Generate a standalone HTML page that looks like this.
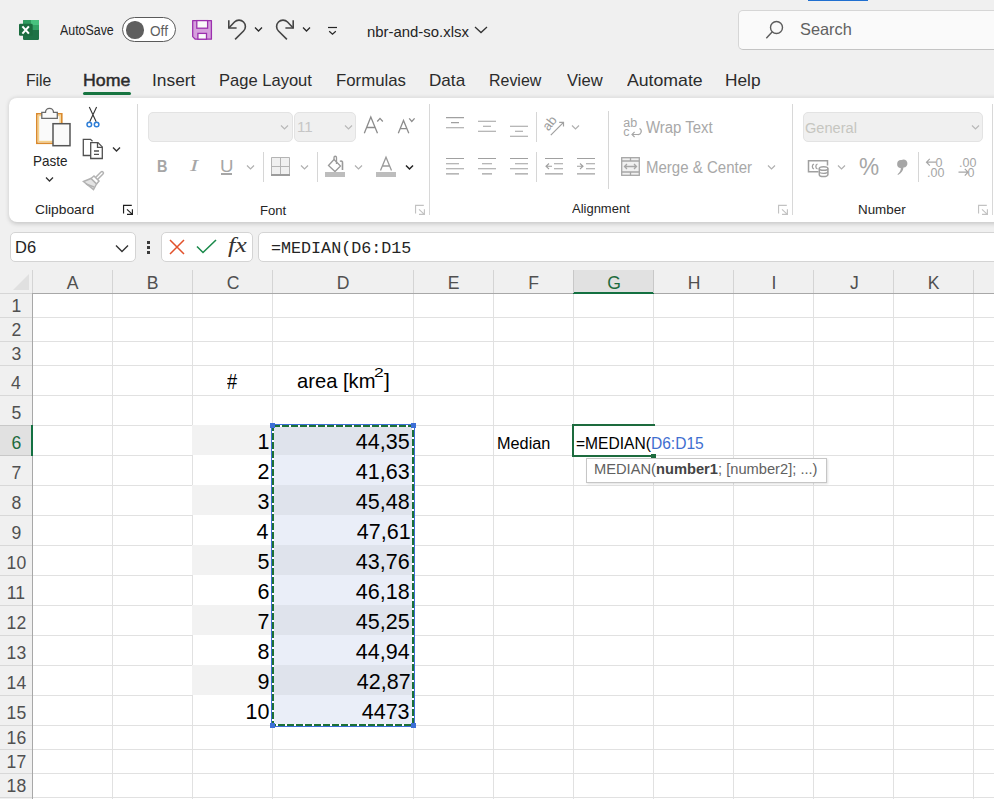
<!DOCTYPE html>
<html><head><meta charset="utf-8">
<style>
*{margin:0;padding:0;box-sizing:border-box}
html,body{width:994px;height:799px;overflow:hidden;background:#f0f0f0;font-family:"Liberation Sans",sans-serif;color:#242424}
.a{position:absolute}
.t{position:absolute;white-space:nowrap;line-height:1}
svg{position:absolute;overflow:visible}
</style></head><body>
<!-- top bar -->
<div class="a" style="left:808px;top:0;width:60px;height:1px;background:#1f6fd0"></div>

<!-- Excel icon -->
<svg style="left:19px;top:20px" width="20" height="20" viewBox="0 0 20 20">
  <rect x="4" y="0" width="16" height="20" rx="1.2" fill="#1e7145"/>
  <path d="M5 0 H12 V5 H4 V1 A1 1 0 0 1 5 0 Z" fill="#2f9c5f"/>
  <path d="M12 0 H19 A1 1 0 0 1 20 1 V5 H12 Z" fill="#48c27f"/>
  <rect x="12" y="5" width="8" height="5" fill="#33a366"/>
  <rect x="4" y="5" width="8" height="5" fill="#2a8a55"/>
  <rect x="0" y="3.8" width="13.7" height="12" rx="1.2" fill="#1b6c3f"/>
  <path d="M3.4 6.4 L9.9 13.6 M9.9 6.4 L3.4 13.6" stroke="#fff" stroke-width="2.1"/>
</svg>

<!-- toggle -->
<div class="a" style="left:122px;top:17px;width:54px;height:25px;border:1px solid #5a5a5a;border-radius:12.5px;background:#fff"></div>
<div class="a" style="left:126.2px;top:21.2px;width:17.4px;height:17.4px;border-radius:50%;background:#5f5f5f"></div>

<!-- save icon -->
<svg style="left:188px;top:16px" width="28" height="28" viewBox="0 0 28 28">
  <path d="M4.7 4.6 H23.4 V23.2 H7.3 L4.7 20.6 Z" fill="#d6a0dd" stroke="#9c30ae" stroke-width="1.3" stroke-linejoin="round"/>
  <rect x="8.8" y="4.6" width="10.8" height="7.6" fill="#fafafa" stroke="#9c30ae" stroke-width="1.3"/>
  <rect x="9.9" y="17.4" width="8.6" height="5.8" fill="#fafafa" stroke="#9c30ae" stroke-width="1.3"/>
</svg>
<!-- undo -->
<svg style="left:222px;top:15px" width="30" height="30" viewBox="0 0 30 30" fill="none" stroke="#454545" stroke-width="1.6">
  <path d="M6.8 5.3 V13 H14.6"/>
  <path d="M6.8 13 L12.47 6.97 A6.4 6.4 0 0 1 21.53 16.03 L13.1 24.4"/>
</svg>
<svg style="left:254px;top:26px" width="9" height="7" viewBox="0 0 9 7" fill="none" stroke="#2a2a2a" stroke-width="1.3"><path d="M1 1.5 L4.5 5 L8 1.5"/></svg>
<!-- redo -->
<svg style="left:270px;top:15px;transform:scaleX(-1)" width="30" height="30" viewBox="0 0 30 30" fill="none" stroke="#454545" stroke-width="1.6">
  <path d="M6.8 5.3 V13 H14.6"/>
  <path d="M6.8 13 L12.47 6.97 A6.4 6.4 0 0 1 21.53 16.03 L13.1 24.4"/>
</svg>
<svg style="left:302px;top:26px" width="9" height="7" viewBox="0 0 9 7" fill="none" stroke="#2a2a2a" stroke-width="1.3"><path d="M1 1.5 L4.5 5 L8 1.5"/></svg>
<!-- customize -->
<svg style="left:327px;top:26px" width="11" height="10" viewBox="0 0 11 10" fill="none" stroke="#262626" stroke-width="1.2"><path d="M1 1.5 H10"/><path d="M2.2 5.2 L5.5 8.3 L8.8 5.2"/></svg>

<svg style="left:474px;top:26px" width="14" height="8" viewBox="0 0 14 8" fill="none" stroke="#333" stroke-width="1.3"><path d="M1 1 L7 6.5 L13 1"/></svg>

<!-- search box -->
<div class="a" style="left:738px;top:10px;width:280px;height:40px;border:1px solid #d6d6d6;border-bottom-color:#c4c4c4;border-radius:5px;background:#fafafa"></div>
<svg style="left:765px;top:20px" width="20" height="20" viewBox="0 0 20 20" fill="none" stroke="#5c5c5c" stroke-width="1.4">
  <circle cx="11.5" cy="7.5" r="6"/><path d="M7.3 11.7 L1.3 18.2"/>
</svg>

<!-- tabs -->
<div class="a" style="left:83px;top:92px;width:48px;height:3px;border-radius:1.5px;background:#177541"></div>

<!-- ribbon panel -->
<div class="a" style="left:9px;top:97px;width:1000px;height:125px;background:#fff;border-radius:8px;border-top:1px solid #e3e3e3;box-shadow:0 1.5px 4px rgba(0,0,0,0.17)"></div>
<!-- Clipboard group -->
<svg style="left:35px;top:107px" width="37" height="40" viewBox="0 0 37 40">
  <rect x="1.8" y="6.8" width="25" height="29.5" fill="#fafafa" stroke="#da8a2e" stroke-width="1.6"/>
  <rect x="3.5" y="8.5" width="21.6" height="26" fill="none" stroke="#f6d189" stroke-width="1.4"/>
  <path d="M6.8 11.3 V5.3 H10.5 A4 4 0 0 1 18.5 5.3 H22.3 V11.3 Z" fill="#fafafa" stroke="#6a6a6a" stroke-width="1.3"/>
  <rect x="18" y="16.7" width="17" height="22" fill="#fafafa" stroke="#555" stroke-width="1.5"/>
</svg>
<svg style="left:45px;top:176px" width="9" height="7" viewBox="0 0 9 7" fill="none" stroke="#333" stroke-width="1.3"><path d="M1 1.5 L4.5 5 L8 1.5"/></svg>
<!-- scissors -->
<svg style="left:85px;top:106px" width="16" height="22" viewBox="0 0 16 22" fill="none">
  <path d="M4.3 1 L11.2 15.8 M11.6 1 L4.7 15.8" stroke="#333" stroke-width="1.1"/>
  <circle cx="4.3" cy="18.5" r="2.3" fill="#fff" stroke="#2f7fd8" stroke-width="1.5"/>
  <circle cx="11.6" cy="18.5" r="2.3" fill="#fff" stroke="#2f7fd8" stroke-width="1.5"/>
</svg>
<!-- copy -->
<svg style="left:82px;top:138px" width="23" height="22" viewBox="0 0 23 22" fill="none" stroke="#505050" stroke-width="1.3">
  <path d="M9 17.5 H1.3 V1.3 H8.5 L10.5 3.3"/>
  <path d="M8.7 4.6 H16 L20.3 8.9 V20.5 H8.7 Z" fill="#fff"/>
  <path d="M15.5 4.6 V9.4 H20.3"/>
  <path d="M12 13 H17 M12 16.3 H17"/>
</svg>
<svg style="left:112px;top:146px" width="9" height="7" viewBox="0 0 9 7" fill="none" stroke="#333" stroke-width="1.4"><path d="M1 1.5 L4.5 5 L8 1.5"/></svg>
<!-- brush -->
<svg style="left:82px;top:170px" width="23" height="21" viewBox="0 0 23 21" fill="none" stroke="#b2b2b2" stroke-width="1.5">
  <path d="M1.5 11.5 L9 8.5 L14.5 14 L11.5 19.5 Z" fill="#e4e4e4"/>
  <path d="M9 8.5 L12 6 L17 11 L14.5 14"/>
  <path d="M13.5 7.5 L19 2 A1.3 1.3 0 0 1 21 4 L15.5 9.5"/>
  <path d="M4 14 L12 17"/>
</svg>
<svg style="left:118.00px;top:200px" width="22" height="20" viewBox="0 0 22 20" fill="none" stroke="#1f1f1f" stroke-width="1.15"><path d="M5.55 13.6 V5.4 H13.8"/><path d="M9 9.3 L14.4 14.3 M14.4 9.3 V14.3 H9"/></svg>
<div class="a" style="left:137px;top:104px;width:1px;height:111px;background:#d8d8d8"></div>

<!-- Font group -->
<div class="a" style="left:148px;top:112px;width:145px;height:30px;background:#f0f0f0;border:1px solid #e3e3e3;border-radius:5px"></div>
<svg style="left:280px;top:124px" width="9" height="7" viewBox="0 0 9 7" fill="none" stroke="#b8b8b8" stroke-width="1.2"><path d="M1 1.5 L4.5 5 L8 1.5"/></svg>
<div class="a" style="left:294px;top:112px;width:62px;height:30px;background:#f0f0f0;border:1px solid #e3e3e3;border-radius:5px"></div>
<svg style="left:344px;top:124px" width="9" height="7" viewBox="0 0 9 7" fill="none" stroke="#b8b8b8" stroke-width="1.2"><path d="M1 1.5 L4.5 5 L8 1.5"/></svg>
<svg style="left:362px;top:115px" width="24" height="20" viewBox="0 0 24 20" fill="none" stroke="#8c8c8c" stroke-width="1.3">
  <path d="M2.3 18.2 L8.8 2 L15.5 18.2 M4.5 12.5 H13.2"/><path d="M15.3 6.5 L18 3.4 L20.8 6.5"/>
</svg>
<svg style="left:396px;top:115px" width="22" height="20" viewBox="0 0 22 20" fill="none" stroke="#8c8c8c" stroke-width="1.3">
  <path d="M2.3 18.2 L7.5 5.5 L12.8 18.2 M4.3 13.7 H10.8"/><path d="M13.2 3.4 L15.8 6.5 L18.6 3.4"/>
</svg>
<div class="a" style="left:221px;top:173px;width:11px;height:1.5px;background:#a6a6a6"></div>
<svg style="left:246px;top:164px" width="9" height="7" viewBox="0 0 9 7" fill="none" stroke="#b0b0b0" stroke-width="1.2"><path d="M1 1.5 L4.5 5 L8 1.5"/></svg>
<div class="a" style="left:263px;top:152px;width:1px;height:30px;background:#d6d6d6"></div>
<svg style="left:271px;top:157px" width="19" height="19" viewBox="0 0 19 19">
  <rect x="0" y="0" width="19" height="19" fill="#f0f0f0"/>
  <path d="M0.5 0.5 H18.5 V18 M0.5 0.5 V18 M0.5 9.5 H18.5 M9.5 0.5 V18" fill="none" stroke="#b4b4b4" stroke-width="1"/>
  <rect x="0" y="17" width="19" height="2" fill="#9c9c9c"/>
</svg>
<svg style="left:300px;top:164px" width="9" height="7" viewBox="0 0 9 7" fill="none" stroke="#b0b0b0" stroke-width="1.2"><path d="M1 1.5 L4.5 5 L8 1.5"/></svg>
<div class="a" style="left:317px;top:152px;width:1px;height:30px;background:#d6d6d6"></div>
<svg style="left:325px;top:156px" width="21" height="22" viewBox="0 0 21 22" fill="none" stroke="#9a9a9a" stroke-width="1.3">
  <path d="M3.5 9.5 L9 3.5 L15.5 10 L10 15.5 Z" fill="#fff"/>
  <path d="M9 3.5 V1.5 A1.2 1.2 0 0 1 11.5 1.5 V8"/>
  <path d="M15 5.5 A1.5 1.5 0 0 1 17.5 7 V14" stroke-width="1.6"/>
  <rect x="0" y="16" width="20" height="5" fill="#bdbdbd" stroke="none"/>
</svg>
<svg style="left:354px;top:164px" width="9" height="7" viewBox="0 0 9 7" fill="none" stroke="#b0b0b0" stroke-width="1.2"><path d="M1 1.5 L4.5 5 L8 1.5"/></svg>
<svg style="left:376px;top:156px" width="21" height="22" viewBox="0 0 21 22" fill="none" stroke="#9a9a9a" stroke-width="1.3">
  <path d="M4.5 14.5 L10 1.2 L15.5 14.5 M6.5 10 H13.5"/>
  <rect x="0" y="16" width="20" height="5" fill="#bdbdbd" stroke="none"/>
</svg>
<svg style="left:405px;top:164px" width="9" height="7" viewBox="0 0 9 7" fill="none" stroke="#222" stroke-width="1.5"><path d="M1 1.5 L4.5 5 L8 1.5"/></svg>
<svg style="left:410.05px;top:200px" width="22" height="20" viewBox="0 0 22 20" fill="none" stroke="#c2c2c2" stroke-width="1.15"><path d="M5.55 13.6 V5.4 H13.8"/><path d="M9 9.3 L14.4 14.3 M14.4 9.3 V14.3 H9"/></svg>
<div class="a" style="left:429px;top:104px;width:1px;height:111px;background:#d8d8d8"></div>

<!-- Alignment group -->
<svg style="left:445px;top:116px" width="84" height="22" viewBox="0 0 84 22" fill="none" stroke="#a0a0a0" stroke-width="1.1">
  <path d="M1 1.6 H19 M6 6.6 H14 M1 11.7 H19"/>
  <path d="M33 5.2 H51 M38 10.3 H46 M33 15.3 H51"/>
  <path d="M65 10.3 H83 M70 15.2 H78 M65 20.2 H83"/>
</svg>
<div class="a" style="left:536px;top:112px;width:1px;height:30px;background:#d6d6d6"></div>
<svg style="left:541px;top:113px" width="26" height="26" viewBox="0 0 26 26" fill="none" stroke="#a0a0a0" stroke-width="1.2">
  <path d="M9.8 22.1 L22.5 9.3 M18.2 9.3 H22.5 V13.5"/>
  <text x="0" y="0" transform="translate(7.6 18.6) rotate(-52)" font-family="Liberation Sans" font-size="13" fill="#9c9c9c" stroke="none">ab</text>
</svg>
<svg style="left:571px;top:124px" width="9" height="7" viewBox="0 0 9 7" fill="none" stroke="#b0b0b0" stroke-width="1.2"><path d="M1 1.5 L4.5 5 L8 1.5"/></svg>
<svg style="left:445px;top:157px" width="150" height="19" viewBox="0 0 150 19" fill="none" stroke="#a0a0a0" stroke-width="1.1">
  <path d="M1 1.5 H19 M1 6.8 H14 M1 11.8 H19 M1 16.9 H14"/>
  <path d="M33 1.5 H51 M37 6.8 H47 M33 11.8 H51 M37 16.9 H47"/>
  <path d="M65 1.5 H83 M70 6.8 H83 M65 11.8 H83 M70 16.9 H83"/>
  <path d="M100 1.5 H118 M109 6.8 H118 M109 11.8 H118 M100 16.9 H118 M101 9.3 H107 M104 6.5 L101 9.3 L104 12"/>
  <path d="M132 1.5 H150 M141 6.8 H150 M141 11.8 H150 M132 16.9 H150 M132 9.3 H138 M135 6.5 L138 9.3 L135 12"/>
</svg>
<div class="a" style="left:536px;top:152px;width:1px;height:30px;background:#d6d6d6"></div>
<div class="a" style="left:608px;top:111px;width:1px;height:78px;background:#d6d6d6"></div>
<svg style="left:622px;top:117px" width="21" height="22" viewBox="0 0 21 22" fill="none" stroke="#a6a6a6" stroke-width="1.2">
  <text x="1.2" y="10" font-family="Liberation Sans" font-size="12.5" fill="#a6a6a6" stroke="none">ab</text>
  <text x="1.2" y="19.2" font-family="Liberation Sans" font-size="12.5" fill="#a6a6a6" stroke="none">c</text>
  <path d="M17.5 11.5 A3.2 3.2 0 0 1 15.5 17.5 H10 M12.6 14.8 L10 17.5 L12.6 20.2"/>
</svg>
<svg style="left:621px;top:157px" width="19" height="19" viewBox="0 0 19 19" fill="none" stroke="#a6a6a6" stroke-width="1.3">
  <rect x="0.7" y="0.7" width="17.6" height="17.6" fill="#f0f0f0"/>
  <path d="M0.7 4 H18.3 M0.7 15 H18.3 M9.5 0.7 V4 M9.5 15 V18.3"/>
  <path d="M3.5 9.5 H15.5 M6 7 L3.5 9.5 L6 12 M13 7 L15.5 9.5 L13 12"/>
</svg>
<svg style="left:767px;top:164px" width="9" height="7" viewBox="0 0 9 7" fill="none" stroke="#b0b0b0" stroke-width="1.2"><path d="M1 1.5 L4.5 5 L8 1.5"/></svg>
<svg style="left:773.05px;top:200px" width="22" height="20" viewBox="0 0 22 20" fill="none" stroke="#c2c2c2" stroke-width="1.15"><path d="M5.55 13.6 V5.4 H13.8"/><path d="M9 9.3 L14.4 14.3 M14.4 9.3 V14.3 H9"/></svg>
<div class="a" style="left:792px;top:104px;width:1px;height:111px;background:#d8d8d8"></div>

<!-- Number group -->
<div class="a" style="left:803px;top:112px;width:180px;height:30px;background:#f0f0f0;border:1px solid #e3e3e3;border-radius:5px"></div>
<svg style="left:971px;top:124px" width="9" height="7" viewBox="0 0 9 7" fill="none" stroke="#b8b8b8" stroke-width="1.2"><path d="M1 1.5 L4.5 5 L8 1.5"/></svg>
<svg style="left:807px;top:159px" width="23" height="19" viewBox="0 0 23 19" fill="none" stroke="#a0a0a0" stroke-width="1.5">
  <path d="M11.5 12.8 H1.5 V1.8 H20.5 V6.5"/>
  <path d="M7 5 A2.3 2.6 0 0 0 7 10 M10.5 5 A2.3 2.6 0 0 0 10.5 10" stroke-width="1.3"/>
  <path d="M12.3 9.5 V15.8 A4.3 1.8 0 0 0 20.9 15.8 V9.5" fill="#fff"/>
  <ellipse cx="16.6" cy="9.5" rx="4.3" ry="1.8" fill="#fff"/>
  <path d="M12.3 12.6 A4.3 1.8 0 0 0 20.9 12.6" stroke-width="1.2"/>
</svg>
<svg style="left:837px;top:164px" width="9" height="7" viewBox="0 0 9 7" fill="none" stroke="#b0b0b0" stroke-width="1.2"><path d="M1 1.5 L4.5 5 L8 1.5"/></svg>
<svg style="left:895px;top:159px" width="13" height="17" viewBox="0 0 13 17"><path d="M6.5 1 A4 4 0 1 1 8.5 8.5 Q8 13 3 16 L2.5 15.2 Q6 12.5 5.8 9 A4 4 0 0 1 6.5 1 Z" fill="#a6a6a6"/></svg>
<div class="a" style="left:918px;top:152px;width:1px;height:30px;background:#d6d6d6"></div>
<svg style="left:925px;top:156px" width="22" height="22" viewBox="0 0 22 22" fill="none" stroke="#a6a6a6" stroke-width="1.2">
  <path d="M1.5 6.2 H11 M4.8 2.8 L1.5 6.2 L4.8 9.6"/>
  <text x="10.5" y="10.6" font-family="Liberation Sans" font-size="12.5" fill="#a6a6a6" stroke="none">0</text>
  <text x="2" y="20.6" font-family="Liberation Sans" font-size="12.5" fill="#a6a6a6" stroke="none">.00</text>
</svg>
<svg style="left:957px;top:156px" width="22" height="22" viewBox="0 0 22 22" fill="none" stroke="#a6a6a6" stroke-width="1.2">
  <text x="2" y="10.6" font-family="Liberation Sans" font-size="12.5" fill="#a6a6a6" stroke="none">.00</text>
  <path d="M1.5 16.2 H11 M7.8 12.8 L11 16.2 L7.8 19.6"/>
  <text x="10.5" y="20.6" font-family="Liberation Sans" font-size="12.5" fill="#a6a6a6" stroke="none">0</text>
</svg>
<svg style="left:972.65px;top:200px" width="22" height="20" viewBox="0 0 22 20" fill="none" stroke="#c2c2c2" stroke-width="1.15"><path d="M5.55 13.6 V5.4 H13.8"/><path d="M9 9.3 L14.4 14.3 M14.4 9.3 V14.3 H9"/></svg>
<div class="a" style="left:992px;top:104px;width:1px;height:111px;background:#d8d8d8"></div>


<!-- formula bar -->
<div class="a" style="left:10px;top:232px;width:126px;height:30px;background:#fff;border:1px solid #d4d4d4;border-radius:5px"></div>
<svg style="left:115px;top:244px" width="14" height="9" viewBox="0 0 14 9" fill="none" stroke="#333" stroke-width="1.4"><path d="M1 1.5 L7 7.5 L13 1.5"/></svg>
<div class="a" style="left:147px;top:241px;width:3px;height:3px;background:#3a3a3a"></div>
<div class="a" style="left:147px;top:246px;width:3px;height:3px;background:#3a3a3a"></div>
<div class="a" style="left:147px;top:251px;width:3px;height:3px;background:#3a3a3a"></div>
<div class="a" style="left:161px;top:232px;width:92px;height:30px;background:#fff;border:1px solid #d4d4d4;border-radius:5px"></div>
<svg style="left:169px;top:239px" width="16" height="16" viewBox="0 0 16 16" fill="none" stroke="#e2512b" stroke-width="1.5"><path d="M1 1 L15 15 M15 1 L1 15"/></svg>
<svg style="left:196px;top:239px" width="21" height="15" viewBox="0 0 21 15" fill="none" stroke="#1b8a4b" stroke-width="1.6"><path d="M1 7.5 L7 13.5 L20 1"/></svg>
<div class="a" style="left:258px;top:232px;width:800px;height:30px;background:#fff;border:1px solid #d4d4d4;border-radius:5px"></div>

<div class="a" style="left:33px;top:294px;width:961px;height:505px;background:#fff"></div>
<div class="a" style="left:33px;top:317px;width:961px;height:1px;background:#e1e1e1"></div>
<div class="a" style="left:33px;top:341px;width:961px;height:1px;background:#e1e1e1"></div>
<div class="a" style="left:33px;top:365px;width:961px;height:1px;background:#e1e1e1"></div>
<div class="a" style="left:33px;top:395px;width:961px;height:1px;background:#e1e1e1"></div>
<div class="a" style="left:33px;top:425px;width:961px;height:1px;background:#e1e1e1"></div>
<div class="a" style="left:33px;top:455px;width:961px;height:1px;background:#e1e1e1"></div>
<div class="a" style="left:33px;top:485px;width:961px;height:1px;background:#e1e1e1"></div>
<div class="a" style="left:33px;top:515px;width:961px;height:1px;background:#e1e1e1"></div>
<div class="a" style="left:33px;top:545px;width:961px;height:1px;background:#e1e1e1"></div>
<div class="a" style="left:33px;top:575px;width:961px;height:1px;background:#e1e1e1"></div>
<div class="a" style="left:33px;top:605px;width:961px;height:1px;background:#e1e1e1"></div>
<div class="a" style="left:33px;top:635px;width:961px;height:1px;background:#e1e1e1"></div>
<div class="a" style="left:33px;top:665px;width:961px;height:1px;background:#e1e1e1"></div>
<div class="a" style="left:33px;top:695px;width:961px;height:1px;background:#e1e1e1"></div>
<div class="a" style="left:33px;top:725px;width:961px;height:1px;background:#e1e1e1"></div>
<div class="a" style="left:33px;top:749px;width:961px;height:1px;background:#e1e1e1"></div>
<div class="a" style="left:33px;top:773px;width:961px;height:1px;background:#e1e1e1"></div>
<div class="a" style="left:33px;top:797px;width:961px;height:1px;background:#e1e1e1"></div>
<div class="a" style="left:33px;top:821px;width:961px;height:1px;background:#e1e1e1"></div>
<div class="a" style="left:112px;top:294px;width:1px;height:505px;background:#e1e1e1"></div>
<div class="a" style="left:192px;top:294px;width:1px;height:505px;background:#e1e1e1"></div>
<div class="a" style="left:272px;top:294px;width:1px;height:505px;background:#e1e1e1"></div>
<div class="a" style="left:413px;top:294px;width:1px;height:505px;background:#e1e1e1"></div>
<div class="a" style="left:493px;top:294px;width:1px;height:505px;background:#e1e1e1"></div>
<div class="a" style="left:573px;top:294px;width:1px;height:505px;background:#e1e1e1"></div>
<div class="a" style="left:653px;top:294px;width:1px;height:505px;background:#e1e1e1"></div>
<div class="a" style="left:733px;top:294px;width:1px;height:505px;background:#e1e1e1"></div>
<div class="a" style="left:813px;top:294px;width:1px;height:505px;background:#e1e1e1"></div>
<div class="a" style="left:893px;top:294px;width:1px;height:505px;background:#e1e1e1"></div>
<div class="a" style="left:973px;top:294px;width:1px;height:505px;background:#e1e1e1"></div>
<div class="a" style="left:1053px;top:294px;width:1px;height:505px;background:#e1e1e1"></div>
<div class="a" style="left:0;top:269px;width:994px;height:24px;background:#f0f0f0"></div>
<div class="a" style="left:32px;top:270px;width:1px;height:23px;background:#d4d4d4"></div>
<div class="a" style="left:112px;top:270px;width:1px;height:23px;background:#d4d4d4"></div>
<div class="a" style="left:192px;top:270px;width:1px;height:23px;background:#d4d4d4"></div>
<div class="a" style="left:272px;top:270px;width:1px;height:23px;background:#d4d4d4"></div>
<div class="a" style="left:413px;top:270px;width:1px;height:23px;background:#d4d4d4"></div>
<div class="a" style="left:493px;top:270px;width:1px;height:23px;background:#d4d4d4"></div>
<div class="a" style="left:573px;top:270px;width:80px;height:23px;background:#e1e1e1"></div>
<div class="a" style="left:573px;top:270px;width:1px;height:23px;background:#d4d4d4"></div>
<div class="a" style="left:653px;top:270px;width:1px;height:23px;background:#d4d4d4"></div>
<div class="a" style="left:733px;top:270px;width:1px;height:23px;background:#d4d4d4"></div>
<div class="a" style="left:813px;top:270px;width:1px;height:23px;background:#d4d4d4"></div>
<div class="a" style="left:893px;top:270px;width:1px;height:23px;background:#d4d4d4"></div>
<div class="a" style="left:973px;top:270px;width:1px;height:23px;background:#d4d4d4"></div>
<div class="a" style="left:0;top:293px;width:32px;height:1px;background:#d6d6d6"></div>
<div class="a" style="left:32px;top:293px;width:962px;height:1px;background:#a8a8a8"></div>
<div class="a" style="left:573px;top:292px;width:81px;height:2px;background:#137041"></div>
<svg style="left:13px;top:274px" width="17" height="17" viewBox="0 0 17 17"><path d="M16 0 V16 H0 Z" fill="#e0e0e0"/></svg>
<div class="a" style="left:0;top:294px;width:32px;height:505px;background:#f0f0f0"></div>
<div class="a" style="left:0;top:317px;width:32px;height:1px;background:#d8d8d8"></div>
<div class="a" style="left:0;top:341px;width:32px;height:1px;background:#d8d8d8"></div>
<div class="a" style="left:0;top:365px;width:32px;height:1px;background:#d8d8d8"></div>
<div class="a" style="left:0;top:395px;width:32px;height:1px;background:#d8d8d8"></div>
<div class="a" style="left:0;top:425px;width:32px;height:1px;background:#d8d8d8"></div>
<div class="a" style="left:0;top:425px;width:32px;height:30px;background:#e1e1e1"></div>
<div class="a" style="left:0;top:455px;width:32px;height:1px;background:#d8d8d8"></div>
<div class="a" style="left:0;top:485px;width:32px;height:1px;background:#d8d8d8"></div>
<div class="a" style="left:0;top:515px;width:32px;height:1px;background:#d8d8d8"></div>
<div class="a" style="left:0;top:545px;width:32px;height:1px;background:#d8d8d8"></div>
<div class="a" style="left:0;top:575px;width:32px;height:1px;background:#d8d8d8"></div>
<div class="a" style="left:0;top:605px;width:32px;height:1px;background:#d8d8d8"></div>
<div class="a" style="left:0;top:635px;width:32px;height:1px;background:#d8d8d8"></div>
<div class="a" style="left:0;top:665px;width:32px;height:1px;background:#d8d8d8"></div>
<div class="a" style="left:0;top:695px;width:32px;height:1px;background:#d8d8d8"></div>
<div class="a" style="left:0;top:725px;width:32px;height:1px;background:#d8d8d8"></div>
<div class="a" style="left:0;top:749px;width:32px;height:1px;background:#d8d8d8"></div>
<div class="a" style="left:0;top:773px;width:32px;height:1px;background:#d8d8d8"></div>
<div class="a" style="left:0;top:797px;width:32px;height:1px;background:#d8d8d8"></div>
<div class="a" style="left:32px;top:293px;width:1px;height:506px;background:#a8a8a8"></div>
<div class="a" style="left:0;top:425px;width:31px;height:1px;background:#c8c8c8"></div>
<div class="a" style="left:0;top:455px;width:31px;height:1px;background:#c8c8c8"></div>
<div class="a" style="left:573px;top:270px;width:1px;height:23px;background:#c8c8c8"></div>
<div class="a" style="left:653px;top:270px;width:1px;height:23px;background:#c8c8c8"></div>
<div class="a" style="left:31px;top:425px;width:2px;height:31px;background:#137041"></div>
<div class="a" style="left:192px;top:425px;width:80px;height:30px;background:#f2f2f2"></div>
<div class="a" style="left:272px;top:425px;width:141px;height:30px;background:#dfe3ec"></div>
<div class="a" style="left:192px;top:455px;width:80px;height:30px;background:#ffffff"></div>
<div class="a" style="left:272px;top:455px;width:141px;height:30px;background:#eaeef8"></div>
<div class="a" style="left:192px;top:455px;width:1px;height:30px;background:#e1e1e1"></div>
<div class="a" style="left:192px;top:485px;width:80px;height:30px;background:#f2f2f2"></div>
<div class="a" style="left:272px;top:485px;width:141px;height:30px;background:#dfe3ec"></div>
<div class="a" style="left:192px;top:515px;width:80px;height:30px;background:#ffffff"></div>
<div class="a" style="left:272px;top:515px;width:141px;height:30px;background:#eaeef8"></div>
<div class="a" style="left:192px;top:515px;width:1px;height:30px;background:#e1e1e1"></div>
<div class="a" style="left:192px;top:545px;width:80px;height:30px;background:#f2f2f2"></div>
<div class="a" style="left:272px;top:545px;width:141px;height:30px;background:#dfe3ec"></div>
<div class="a" style="left:192px;top:575px;width:80px;height:30px;background:#ffffff"></div>
<div class="a" style="left:272px;top:575px;width:141px;height:30px;background:#eaeef8"></div>
<div class="a" style="left:192px;top:575px;width:1px;height:30px;background:#e1e1e1"></div>
<div class="a" style="left:192px;top:605px;width:80px;height:30px;background:#f2f2f2"></div>
<div class="a" style="left:272px;top:605px;width:141px;height:30px;background:#dfe3ec"></div>
<div class="a" style="left:192px;top:635px;width:80px;height:30px;background:#ffffff"></div>
<div class="a" style="left:272px;top:635px;width:141px;height:30px;background:#eaeef8"></div>
<div class="a" style="left:192px;top:635px;width:1px;height:30px;background:#e1e1e1"></div>
<div class="a" style="left:192px;top:665px;width:80px;height:30px;background:#f2f2f2"></div>
<div class="a" style="left:272px;top:665px;width:141px;height:30px;background:#dfe3ec"></div>
<div class="a" style="left:192px;top:695px;width:80px;height:30px;background:#ffffff"></div>
<div class="a" style="left:272px;top:695px;width:141px;height:30px;background:#eaeef8"></div>
<div class="a" style="left:192px;top:695px;width:1px;height:30px;background:#e1e1e1"></div>
<svg style="left:270px;top:423px" width="147" height="306" viewBox="0 0 147 306">
<rect x="1.5" y="1.5" width="143" height="302" fill="none" stroke="#3d6fd6" stroke-width="1"/>
<rect x="3" y="3" width="140" height="299" fill="none" stroke="#ffffff" stroke-width="2"/>
<rect x="3" y="3" width="140" height="299" fill="none" stroke="#1c7036" stroke-width="2" stroke-dasharray="7 2"/>
<rect x="0" y="0" width="5" height="5" fill="#3d6fd6"/>
<rect x="141" y="0" width="5" height="5" fill="#3d6fd6"/>
<rect x="0" y="300" width="5" height="5" fill="#3d6fd6"/>
<rect x="141" y="300" width="5" height="5" fill="#3d6fd6"/>
</svg>
<div class="a" style="left:572px;top:424px;width:83px;height:33px;border:2px solid #1d6b3e;border-right:none"></div>
<div class="a" style="left:574px;top:426px;width:150px;height:29px;background:#fff"></div>
<div class="a" style="left:651px;top:454px;width:5px;height:4px;background:#1d6b3e"></div>
<div class="a" style="left:586px;top:458px;width:241px;height:25px;background:#fff;border:1px solid #c6c6c6;box-shadow:1px 1px 2px rgba(0,0,0,0.12)"></div>
<div class="t" id="autosave" style="left:60.00px;top:24.25px;font-size:13.8px;color:#242424;transform:scaleX(0.8983);transform-origin:0 0">AutoSave</div>
<div class="t" id="off" style="left:149.60px;top:25.25px;font-size:13.8px;color:#5f5f5f;transform:scaleX(0.9874);transform-origin:0 0">Off</div>
<div class="t" id="fname" style="left:367.20px;top:24.54px;font-size:14.5px;color:#242424;transform:scaleX(1.0276);transform-origin:0 0">nbr-and-so.xlsx</div>
<div class="t" id="search" style="left:800.00px;top:21.20px;font-size:16.5px;color:#616161;transform:scaleX(0.9907);transform-origin:0 0">Search</div>
<div class="t" id="tab_File" style="left:25.60px;top:73.08px;font-size:16.6px;color:#2b2b2b;transform:scaleX(0.9488);transform-origin:0 0">File</div>
<div class="t" id="tab_Home" style="left:82.60px;top:73.08px;font-size:16.6px;color:#2b2b2b;-webkit-text-stroke:0.45px #2b2b2b;transform:scaleX(1.0697);transform-origin:0 0">Home</div>
<div class="t" id="tab_Insert" style="left:151.60px;top:73.08px;font-size:16.6px;color:#2b2b2b;transform:scaleX(1.0459);transform-origin:0 0">Insert</div>
<div class="t" id="tab_Page_Layout" style="left:218.80px;top:73.18px;font-size:16.6px;color:#2b2b2b;transform:scaleX(0.9970);transform-origin:0 0">Page Layout</div>
<div class="t" id="tab_Formulas" style="left:336.00px;top:73.08px;font-size:16.6px;color:#2b2b2b;transform:scaleX(1.0108);transform-origin:0 0">Formulas</div>
<div class="t" id="tab_Data" style="left:428.80px;top:73.18px;font-size:16.6px;color:#2b2b2b;transform:scaleX(1.0311);transform-origin:0 0">Data</div>
<div class="t" id="tab_Review" style="left:489.40px;top:73.08px;font-size:16.6px;color:#2b2b2b;transform:scaleX(0.9609);transform-origin:0 0">Review</div>
<div class="t" id="tab_View" style="left:567.00px;top:73.08px;font-size:16.6px;color:#2b2b2b;transform:scaleX(0.9983);transform-origin:0 0">View</div>
<div class="t" id="tab_Automate" style="left:627.20px;top:73.18px;font-size:16.6px;color:#2b2b2b;transform:scaleX(1.0650);transform-origin:0 0">Automate</div>
<div class="t" id="tab_Help" style="left:725.40px;top:73.08px;font-size:16.6px;color:#2b2b2b;transform:scaleX(1.0417);transform-origin:0 0">Help</div>
<div class="t" id="paste" style="left:32.80px;top:154.17px;font-size:14.3px;color:#242424;transform:scaleX(0.9429);transform-origin:0 0">Paste</div>
<div class="t" id="clipboard" style="left:35.20px;top:202.74px;font-size:13.3px;color:#242424;transform:scaleX(1.0377);transform-origin:0 0">Clipboard</div>
<div class="t" id="font" style="left:259.80px;top:203.54px;font-size:13.3px;color:#242424;transform:scaleX(0.9863);transform-origin:0 0">Font</div>
<div class="t" id="alignment" style="left:572.00px;top:202.34px;font-size:13.3px;color:#242424;transform:scaleX(0.9764);transform-origin:0 0">Alignment</div>
<div class="t" id="number" style="left:857.80px;top:203.14px;font-size:13.3px;color:#242424;transform:scaleX(1.0066);transform-origin:0 0">Number</div>
<div class="t" id="sz11" style="left:297.20px;top:119.42px;font-size:15.2px;color:#c6c6c6;transform:scaleX(0.9966);transform-origin:0 0">11</div>
<div class="t" id="wrap" style="left:646.00px;top:120.48px;font-size:16px;color:#a8a8a8;transform:scaleX(0.9338);transform-origin:0 0">Wrap Text</div>
<div class="t" id="merge" style="left:645.60px;top:160.48px;font-size:16px;color:#a8a8a8;transform:scaleX(0.9388);transform-origin:0 0">Merge &amp; Center</div>
<div class="t" id="general" style="left:805.20px;top:119.98px;font-size:15.4px;color:#c6c6c0;transform:scaleX(0.9475);transform-origin:0 0">General</div>
<div class="t" id="bB" style="left:157.40px;top:157.91px;font-size:17px;color:#a6a6a6;font-weight:bold;transform:scaleX(0.8502);transform-origin:0 0">B</div>
<div class="t" id="bI" style="left:190.00px;top:156.91px;font-size:17px;color:#a6a6a6;font-family:'Liberation Serif',serif;font-style:italic;transform:scaleX(1.4315);transform-origin:0 0">I</div>
<div class="t" id="bU" style="left:220.00px;top:159.08px;font-size:16px;color:#a6a6a6;transform:scaleX(1.1657);transform-origin:0 0">U</div>
<div class="t" id="pct" style="left:858.80px;top:155.34px;font-size:24.5px;color:#a6a6a6;transform:scaleX(0.9236);transform-origin:0 0">%</div>
<div class="t" id="namebox" style="left:15.00px;top:239.24px;font-size:17.4px;color:#242424;transform:scaleX(0.9470);transform-origin:0 0">D6</div>
<div class="t" id="formula" style="left:270.60px;top:240.78px;font-size:16.6px;color:#242424;font-family:'Liberation Mono',monospace;transform:scaleX(1.0066);transform-origin:0 0">=MEDIAN(D6:D15</div>
<div class="t" id="fx" style="left:228.00px;top:234.60px;font-size:20px;color:#333;font-family:'Liberation Serif',serif;font-style:italic;transform:scaleX(1.2955);transform-origin:0 0">fx</div>
<div class="t" id="col_A" style="left:22.50px;width:100px;text-align:center;top:274.91px;font-size:17.6px;color:#505050;transform:scaleX(1.0000);transform-origin:50% 0">A</div>
<div class="t" id="col_B" style="left:102.50px;width:100px;text-align:center;top:274.91px;font-size:17.6px;color:#505050;transform:scaleX(1.0000);transform-origin:50% 0">B</div>
<div class="t" id="col_C" style="left:183.00px;width:100px;text-align:center;top:274.91px;font-size:17.6px;color:#505050;transform:scaleX(1.0000);transform-origin:50% 0">C</div>
<div class="t" id="col_D" style="left:293.00px;width:100px;text-align:center;top:274.91px;font-size:17.6px;color:#505050;transform:scaleX(1.0000);transform-origin:50% 0">D</div>
<div class="t" id="col_E" style="left:403.50px;width:100px;text-align:center;top:274.91px;font-size:17.6px;color:#505050;transform:scaleX(1.0000);transform-origin:50% 0">E</div>
<div class="t" id="col_F" style="left:483.50px;width:100px;text-align:center;top:274.91px;font-size:17.6px;color:#505050;transform:scaleX(1.0000);transform-origin:50% 0">F</div>
<div class="t" id="col_G" style="left:564.00px;width:100px;text-align:center;top:274.91px;font-size:17.6px;color:#1d6b3e;transform:scaleX(1.0000);transform-origin:50% 0">G</div>
<div class="t" id="col_H" style="left:644.00px;width:100px;text-align:center;top:274.91px;font-size:17.6px;color:#505050;transform:scaleX(1.0000);transform-origin:50% 0">H</div>
<div class="t" id="col_I" style="left:724.00px;width:100px;text-align:center;top:274.91px;font-size:17.6px;color:#505050;transform:scaleX(1.0000);transform-origin:50% 0">I</div>
<div class="t" id="col_J" style="left:804.50px;width:100px;text-align:center;top:274.91px;font-size:17.6px;color:#505050;transform:scaleX(1.0000);transform-origin:50% 0">J</div>
<div class="t" id="col_K" style="left:883.50px;width:100px;text-align:center;top:274.91px;font-size:17.6px;color:#505050;transform:scaleX(1.0000);transform-origin:50% 0">K</div>
<div class="t" id="col_L" style="left:964.00px;width:100px;text-align:center;top:272.91px;font-size:17.6px;color:#505050;transform:scaleX(1.0000);transform-origin:50% 0">L</div>
<div class="t" id="row_1" style="left:-33.60px;width:100px;text-align:center;top:298.41px;font-size:17.6px;color:#505050;transform:scaleX(1.0000);transform-origin:50% 0">1</div>
<div class="t" id="row_2" style="left:-33.60px;width:100px;text-align:center;top:322.41px;font-size:17.6px;color:#505050;transform:scaleX(1.0000);transform-origin:50% 0">2</div>
<div class="t" id="row_3" style="left:-33.60px;width:100px;text-align:center;top:346.41px;font-size:17.6px;color:#505050;transform:scaleX(1.0000);transform-origin:50% 0">3</div>
<div class="t" id="row_4" style="left:-34.10px;width:100px;text-align:center;top:375.41px;font-size:17.6px;color:#505050;transform:scaleX(1.0000);transform-origin:50% 0">4</div>
<div class="t" id="row_5" style="left:-33.60px;width:100px;text-align:center;top:405.41px;font-size:17.6px;color:#505050;transform:scaleX(1.0000);transform-origin:50% 0">5</div>
<div class="t" id="row_6" style="left:-33.60px;width:100px;text-align:center;top:435.41px;font-size:17.6px;color:#1d6b3e;transform:scaleX(1.0000);transform-origin:50% 0">6</div>
<div class="t" id="row_7" style="left:-33.60px;width:100px;text-align:center;top:465.41px;font-size:17.6px;color:#505050;transform:scaleX(1.0000);transform-origin:50% 0">7</div>
<div class="t" id="row_8" style="left:-33.60px;width:100px;text-align:center;top:495.41px;font-size:17.6px;color:#505050;transform:scaleX(1.0000);transform-origin:50% 0">8</div>
<div class="t" id="row_9" style="left:-33.60px;width:100px;text-align:center;top:525.41px;font-size:17.6px;color:#505050;transform:scaleX(1.0000);transform-origin:50% 0">9</div>
<div class="t" id="row_10" style="left:-33.60px;width:100px;text-align:center;top:555.41px;font-size:17.6px;color:#505050;transform:scaleX(1.0000);transform-origin:50% 0">10</div>
<div class="t" id="row_11" style="left:-34.10px;width:100px;text-align:center;top:585.41px;font-size:17.6px;color:#505050;transform:scaleX(1.0000);transform-origin:50% 0">11</div>
<div class="t" id="row_12" style="left:-33.60px;width:100px;text-align:center;top:615.41px;font-size:17.6px;color:#505050;transform:scaleX(1.0000);transform-origin:50% 0">12</div>
<div class="t" id="row_13" style="left:-33.60px;width:100px;text-align:center;top:645.41px;font-size:17.6px;color:#505050;transform:scaleX(1.0000);transform-origin:50% 0">13</div>
<div class="t" id="row_14" style="left:-33.60px;width:100px;text-align:center;top:675.41px;font-size:17.6px;color:#505050;transform:scaleX(1.0000);transform-origin:50% 0">14</div>
<div class="t" id="row_15" style="left:-33.60px;width:100px;text-align:center;top:705.41px;font-size:17.6px;color:#505050;transform:scaleX(1.0000);transform-origin:50% 0">15</div>
<div class="t" id="row_16" style="left:-33.60px;width:100px;text-align:center;top:730.41px;font-size:17.6px;color:#505050;transform:scaleX(1.0000);transform-origin:50% 0">16</div>
<div class="t" id="row_17" style="left:-33.60px;width:100px;text-align:center;top:754.41px;font-size:17.6px;color:#505050;transform:scaleX(1.0000);transform-origin:50% 0">17</div>
<div class="t" id="row_18" style="left:-33.60px;width:100px;text-align:center;top:778.41px;font-size:17.6px;color:#505050;transform:scaleX(1.0000);transform-origin:50% 0">18</div>
<div class="t" id="c0" style="left:-30.60px;width:300px;text-align:right;top:432.35px;font-size:21.5px;color:#000;transform:scaleX(1.0000);transform-origin:100% 0">1</div>
<div class="t" id="d0" style="left:109.60px;width:300px;text-align:right;top:432.35px;font-size:21.5px;color:#000;transform:scaleX(1.0000);transform-origin:100% 0">44,35</div>
<div class="t" id="c1" style="left:-30.60px;width:300px;text-align:right;top:462.35px;font-size:21.5px;color:#000;transform:scaleX(1.0000);transform-origin:100% 0">2</div>
<div class="t" id="d1" style="left:109.60px;width:300px;text-align:right;top:462.35px;font-size:21.5px;color:#000;transform:scaleX(1.0000);transform-origin:100% 0">41,63</div>
<div class="t" id="c2" style="left:-30.60px;width:300px;text-align:right;top:492.35px;font-size:21.5px;color:#000;transform:scaleX(1.0000);transform-origin:100% 0">3</div>
<div class="t" id="d2" style="left:109.60px;width:300px;text-align:right;top:492.35px;font-size:21.5px;color:#000;transform:scaleX(1.0000);transform-origin:100% 0">45,48</div>
<div class="t" id="c3" style="left:-31.60px;width:300px;text-align:right;top:522.35px;font-size:21.5px;color:#000;transform:scaleX(1.0000);transform-origin:100% 0">4</div>
<div class="t" id="d3" style="left:110.60px;width:300px;text-align:right;top:522.35px;font-size:21.5px;color:#000;transform:scaleX(1.0000);transform-origin:100% 0">47,61</div>
<div class="t" id="c4" style="left:-30.60px;width:300px;text-align:right;top:552.35px;font-size:21.5px;color:#000;transform:scaleX(1.0000);transform-origin:100% 0">5</div>
<div class="t" id="d4" style="left:109.60px;width:300px;text-align:right;top:552.35px;font-size:21.5px;color:#000;transform:scaleX(1.0000);transform-origin:100% 0">43,76</div>
<div class="t" id="c5" style="left:-30.60px;width:300px;text-align:right;top:582.35px;font-size:21.5px;color:#000;transform:scaleX(1.0000);transform-origin:100% 0">6</div>
<div class="t" id="d5" style="left:109.60px;width:300px;text-align:right;top:582.35px;font-size:21.5px;color:#000;transform:scaleX(1.0000);transform-origin:100% 0">46,18</div>
<div class="t" id="c6" style="left:-30.60px;width:300px;text-align:right;top:612.35px;font-size:21.5px;color:#000;transform:scaleX(1.0000);transform-origin:100% 0">7</div>
<div class="t" id="d6" style="left:109.60px;width:300px;text-align:right;top:612.35px;font-size:21.5px;color:#000;transform:scaleX(1.0000);transform-origin:100% 0">45,25</div>
<div class="t" id="c7" style="left:-30.60px;width:300px;text-align:right;top:642.35px;font-size:21.5px;color:#000;transform:scaleX(1.0000);transform-origin:100% 0">8</div>
<div class="t" id="d7" style="left:109.60px;width:300px;text-align:right;top:642.35px;font-size:21.5px;color:#000;transform:scaleX(1.0000);transform-origin:100% 0">44,94</div>
<div class="t" id="c8" style="left:-30.60px;width:300px;text-align:right;top:672.35px;font-size:21.5px;color:#000;transform:scaleX(1.0000);transform-origin:100% 0">9</div>
<div class="t" id="d8" style="left:110.60px;width:300px;text-align:right;top:672.35px;font-size:21.5px;color:#000;transform:scaleX(1.0000);transform-origin:100% 0">42,87</div>
<div class="t" id="c9" style="left:-30.60px;width:300px;text-align:right;top:702.35px;font-size:21.5px;color:#000;transform:scaleX(1.0000);transform-origin:100% 0">10</div>
<div class="t" id="d9" style="left:109.60px;width:300px;text-align:right;top:702.35px;font-size:21.5px;color:#000;transform:scaleX(1.0000);transform-origin:100% 0">4473</div>
<div class="t" id="hash" style="left:227.40px;top:372.35px;font-size:21.5px;color:#000;transform:scaleX(0.8470);transform-origin:0 0">#</div>
<div class="t" id="area" style="left:296.90px;top:369.53px;font-size:21px;color:#000;transform:scaleX(0.9604);transform-origin:0 0">area [km</div>
<div class="t" id="sup2" style="left:374.20px;top:365.99px;font-size:13px;color:#000;transform:scaleX(1.3475);transform-origin:0 0">2</div>
<div class="t" id="brk" style="left:384.00px;top:370.43px;font-size:21px;color:#000;transform:scaleX(1.0000);transform-origin:0 0">]</div>
<div class="t" id="median" style="left:497.00px;top:436.11px;font-size:15.8px;color:#000;transform:scaleX(1.0303);transform-origin:0 0">Median</div>
<div class="t" id="edit" style="left:576.00px;top:435.91px;font-size:15.8px;color:#000;transform:scaleX(0.9868);transform-origin:0 0">=MEDIAN(<span style="color:#3f6fd0">D6:D15</span></div>
<div class="t" id="tip" style="left:594.20px;top:460.77px;font-size:15.5px;color:#616161;transform:scaleX(0.9470);transform-origin:0 0">MEDIAN(<b style="color:#444">number1</b>; [number2]; ...)</div>
</body></html>
